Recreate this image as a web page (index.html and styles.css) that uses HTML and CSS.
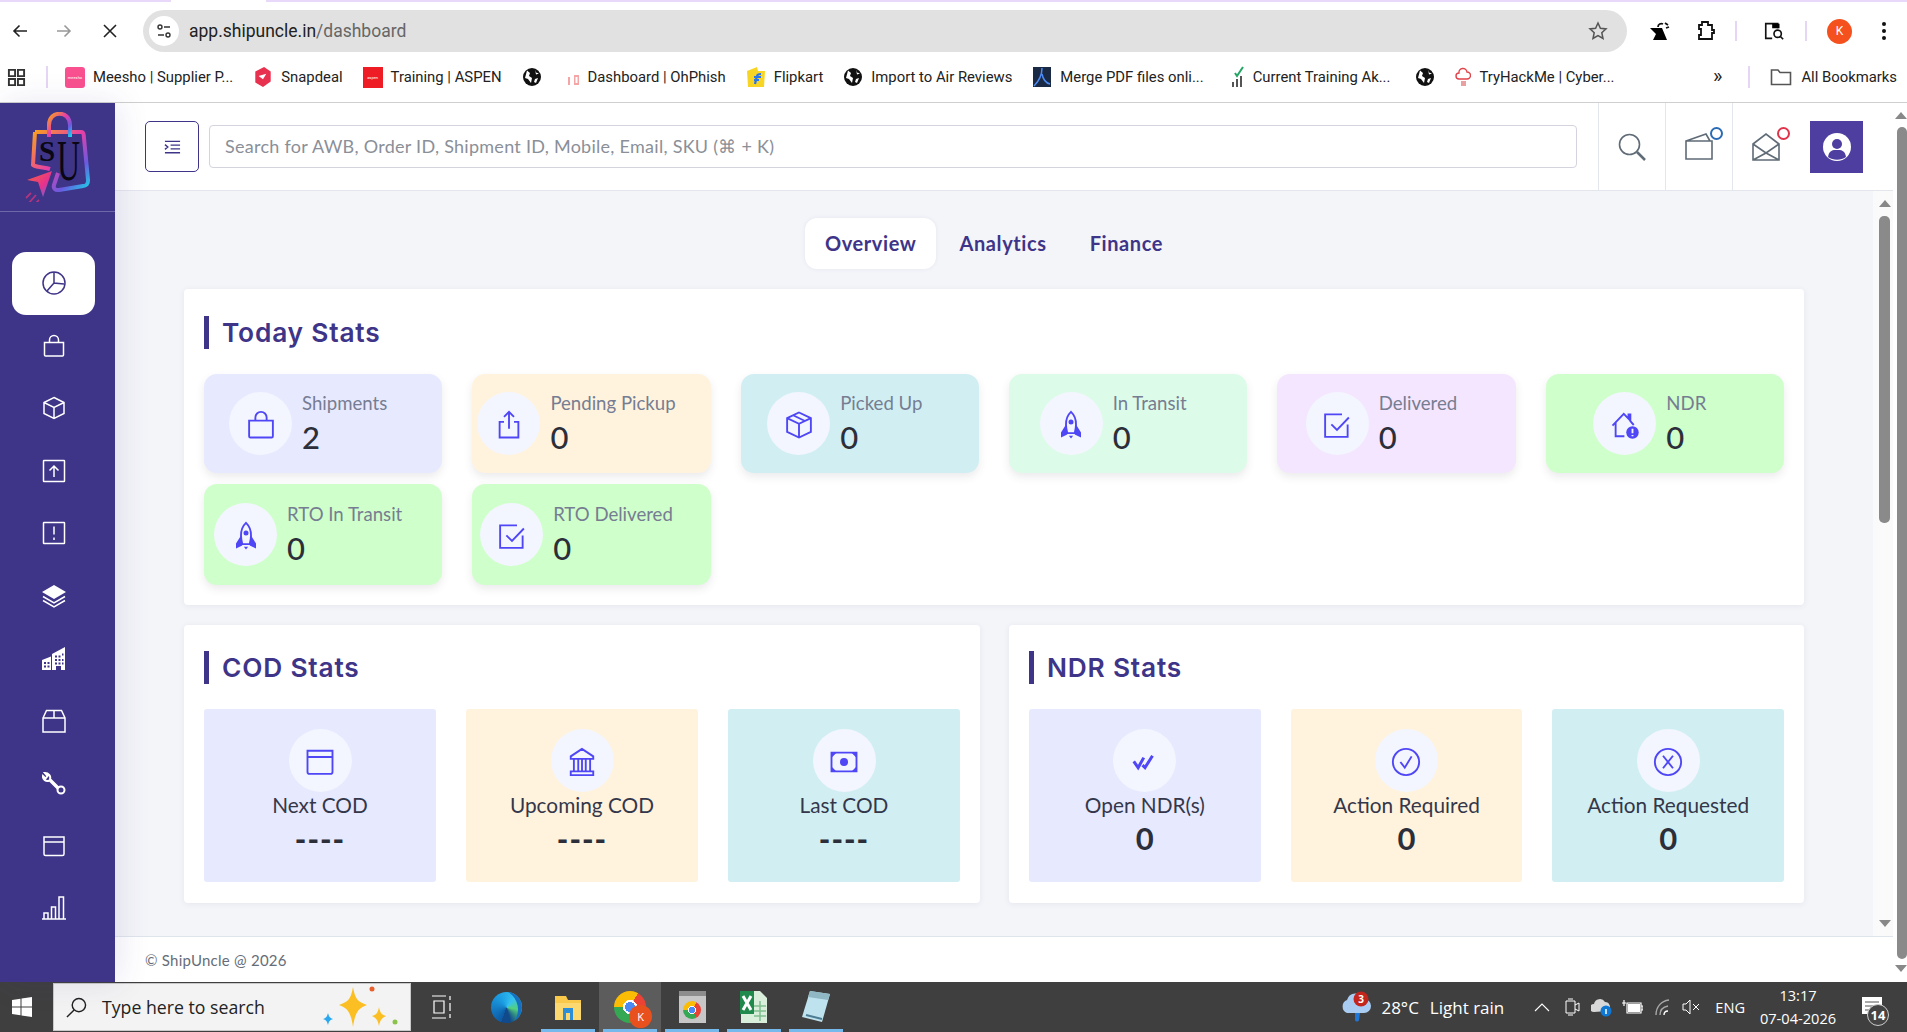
FILE: index.html
```html
<!DOCTYPE html>
<html lang="en">
<head>
    <meta charset="UTF-8">
    <title>ShipUncle Dashboard</title>
    <link rel="stylesheet" href="styles.css">
</head>
<body>
    <!-- shared icons -->
    <svg class="defs" aria-hidden="true">
        <symbol id="i-bag" viewBox="0 0 24 24"><path d="M2.500 8.500h19v12.500a1 1 0 0 1-1 1h-17a1 1 0 0 1-1-1zM7.500 8.500V6a4.500 4.500 0 0 1 9 0v2.500"/></symbol>
        <symbol id="i-box" viewBox="0 0 24 24"><path d="M12 1.500l10 5v11l-10 5-10-5v-11zM2 6.500l10 5 10-5M12 11.500v11"/></symbol>
        <symbol id="i-tapebox" viewBox="0 0 24 24"><path d="M12 2l9.500 4.500v11L12 22l-9.500-4.500v-11zM2.500 6.500L12 11l9.500-4.500M12 11v11M7.300 4.200l9.500 4.600"/></symbol>
        <symbol id="i-share" viewBox="0 0 24 24"><path d="M8 9.500H4.500v12.500h15V9.500H16M12 1.500V15M8 5.500l4-4 4 4"/></symbol>
        <symbol id="i-rocket" viewBox="0 0 24 24"><path d="M12 1.500c3 2.800 4 6.500 4 10 0 2.700-.5 5-1 7H9c-.5-2-1-4.300-1-7 0-3.500 1-7.200 4-10z"/><circle class="solid" cx="12" cy="9.500" r="2"/><path class="solid" d="M8 11.500l-4 6.500v4l5-2.500zM16 11.500l4 6.500v4l-5-2.500zM10.300 20.500h3.400L12 22.800z"/></symbol>
        <symbol id="i-check" viewBox="0 0 24 24"><path d="M20.500 11.500v10h-18v-18h13.500M7.500 11.500l4.500 4.500 9.500-10"/></symbol>
        <symbol id="i-home" viewBox="0 0 24 24"><path d="M2 12.500L11 3l3.800 4V3.500h1.500v5.500l2.700 3M4.500 10v11h7"/><circle class="solid" cx="18" cy="18" r="5"/><path class="cut" d="M18 15v3.500M18 20v1"/></symbol>
        <symbol id="i-window" viewBox="0 0 24 24"><path d="M2 3h20v17a1.500 1.500 0 0 1-1.500 1.500h-17A1.500 1.500 0 0 1 2 20zM2 8h20"/></symbol>
        <symbol id="i-bank" viewBox="0 0 24 24"><path d="M12 1.500L3 7.500v2h18v-2zM5.500 9.500v10M9 9.500v10M12 9.500v10M15 9.500v10M18.500 9.500v10M3 19.500h18v3H3z"/></symbol>
        <symbol id="i-cash" viewBox="0 0 24 24"><path d="M2 4.500h20v15H2z"/><circle class="solid" cx="12" cy="12" r="3.200"/><path class="solid" d="M2 4.500h4l-4 4zM22 4.500h-4l4 4zM2 19.500h4l-4-4zM22 19.500h-4l4-4z"/></symbol>
        <symbol id="i-double" viewBox="0 0 24 24"><path class="heavy" d="M3 11.500l3.500 5L11 8.500M10 14.500l2 2L18 7"/></symbol>
        <symbol id="i-circle-check" viewBox="0 0 24 24"><circle cx="12" cy="12" r="10.500"/><path d="M7.500 12l3.500 4.500 5.500-9"/></symbol>
        <symbol id="i-circle-x" viewBox="0 0 24 24"><circle cx="12" cy="12" r="10.500"/><path d="M8 7l8 10M16 7L8 17"/></symbol>
        <symbol id="i-globe" viewBox="0 0 20 20"><circle class="solid" cx="10" cy="10" r="9"/><path class="cut-white" d="M5 3.500l3 2.500-1 3 3 2-1 5-3-4-3-1zM13 2.500l1 3 3 1-3 1zM13 12l3-1-2 5-2-1z"/></symbol>
    </svg>

    <div class="tabstrip"><span class="tabstrip-gap"></span></div>

    <div class="toolbar">
        <svg class="nav nav-back" viewBox="0 0 16 16"><path d="M15 8H2M7.500 2.500L2 8l5.500 5.500"/></svg>
        <svg class="nav nav-fwd" viewBox="0 0 16 16"><path d="M1 8h13M8.500 2.500L14 8l-5.500 5.500"/></svg>
        <svg class="nav nav-stop" viewBox="0 0 14 14"><path d="M1 1l12 12M13 1L1 13"/></svg>
        <div class="omnibox">
            <span class="site-btn">
                <svg viewBox="0 0 16 16"><circle cx="4" cy="4" r="2"/><path d="M8 4h6M2 12h6"/><circle cx="12" cy="12" r="2"/></svg>
            </span>
            <span class="url">app.shipuncle.in<span class="url-path">/dashboard</span></span>
            <svg class="star" viewBox="0 0 20 20"><path d="M10 2l2.400 5.300 5.600.6-4.200 3.800 1.200 5.800L10 14.600l-5 2.900 1.200-5.800L2 7.900l5.600-.6z"/></svg>
        </div>
        <svg class="ext ext-one" viewBox="0 0 22 22"><path d="M2 8h12l5 12H5l3-6z"/><path class="ext-line" d="M10 7c0-3 3-4 5-3M17 3l3 2M18 8l3-1"/></svg>
        <svg class="ext ext-two" viewBox="0 0 22 22"><path class="ext-line" d="M5 5h3V2h6v3h4v5h2v3h-2v6H5v-4h2V9H5z"/></svg>
        <span class="toolbar-sep"></span>
        <svg class="ext ext-three" viewBox="0 0 24 24"><path class="ext-line" d="M10 20H3V4h13v5"/><path d="M10 4h8v5h-8z"/><circle class="ext-line" cx="16" cy="15" r="4"/><path class="ext-line" d="M19 18l3 3"/></svg>
        <span class="toolbar-sep toolbar-sep-b"></span>
        <span class="profile">K</span>
        <span class="kebab"><i></i><i></i><i></i></span>
    </div>

    <div class="bookmarks">
        <svg class="apps" viewBox="0 0 20 20"><path d="M2 2h6.500v6.500H2zM11.500 2H18v6.500h-6.500zM2 11.500h6.500V18H2zM11.500 11.500H18V18h-6.500z"/></svg>
        <span class="bm-sep"></span>
        <div class="bm-list">
            <span class="bm"><span class="fav fav-meesho">meesho</span>Meesho | Supplier P...</span>
            <span class="bm"><svg class="fav-svg" viewBox="0 0 18 20"><path d="M2 5l8-4 6 4v9l-7 5-7-4z" fill="#e8304f"/><path d="M5 9l7-2-3 5z" fill="#fff"/></svg>Snapdeal</span>
            <span class="bm"><span class="fav fav-aspen">aspen</span>Training | ASPEN</span>
            <span class="bm bm-icon"><svg class="fav-globe"><use href="#i-globe"/></svg></span>
            <span class="bm bm-push"><svg class="fav-ohphish" viewBox="0 0 13 20"><path d="M1 10h2v8H1zM7 8h5v10H7zM8.500 10v6h2v-6z" fill="#f4a6a6" fill-rule="evenodd"/></svg>Dashboard | OhPhish</span>
            <span class="bm"><svg class="fav-svg" viewBox="0 0 20 22"><path d="M1 5l10-4 1 4h7l-1 16H2z" fill="#f8d524"/><path d="M8 11h7M9 18l2-8c.4-2 2-2 4-2M8 14h5" fill="none" stroke="#2874f0" stroke-width="2.200"/></svg>Flipkart</span>
            <span class="bm"><svg class="fav-globe"><use href="#i-globe"/></svg>Import to Air Reviews</span>
            <span class="bm"><svg class="fav-svg" viewBox="0 0 20 22"><path d="M1 1h18v20H1z" fill="#1b2a44"/><path d="M10 2c0 8-3 13-8 18M10 8c1 5 4 9 8 10" fill="none" stroke="#4d8cf5" stroke-width="1.500"/></svg>Merge PDF files onli...</span>
            <span class="bm bm-push"><svg class="fav-current" viewBox="0 0 14 22"><path d="M5 7l2 3 6-9" fill="none" stroke="#22a565" stroke-width="2"/><path d="M2 16h2v5H2zM6 13h2v8H6zM10 10h2v11h-2z" fill="#555"/></svg>Current Training Ak...</span>
            <span class="bm bm-icon bm-push"><svg class="fav-globe"><use href="#i-globe"/></svg></span>
            <span class="bm"><svg class="fav-current" viewBox="0 0 16 22"><path d="M4 13a3 3 0 0 1 0-6 4 4 0 0 1 8-1 3.500 3.500 0 0 1 0 7z" fill="none" stroke="#e0434a" stroke-width="1.400"/><path d="M6 15h5v5H6z" fill="#e9a0a0"/></svg>TryHackMe | Cyber...</span>
        </div>
        <span class="bm-more">»</span>
        <span class="bm-sep bm-sep-b"></span>
        <svg class="bm-folder" viewBox="0 0 22 18"><path d="M1.500 2h6.500l2 2.500h10.500v12h-19z"/></svg>
        <span class="bm-all">All Bookmarks</span>
    </div>

    <div class="app">
        <aside class="sidebar">
            <div class="logo">
                <svg viewBox="0 0 70 90" width="70" height="90">
                    <defs>
                        <linearGradient id="logo-grad" x1="0" y1="0" x2="1" y2="1">
                            <stop offset="0" stop-color="#f9a11b"/>
                            <stop offset=".45" stop-color="#e63fa8"/>
                            <stop offset=".75" stop-color="#6a5ae0"/>
                            <stop offset="1" stop-color="#19d3e8"/>
                        </linearGradient>
                        <linearGradient id="arrow-grad" x1="0" y1="0" x2="1" y2="1">
                            <stop offset="0" stop-color="#f9643a"/>
                            <stop offset=".6" stop-color="#e6318f"/>
                            <stop offset="1" stop-color="#3a7bf0"/>
                        </linearGradient>
                    </defs>
                    <path class="logo-line" d="M12 20h46c2 0 2.500 1 2.700 3L65 68c.3 4-2 6-5 6L36 78c-4 .5-6-2-5-5l4-12M12 20L10 53c5 3 11 2 17 4"/>
                    <path class="logo-line" d="M26 25V13c0-15 21-15 21 0v12"/>
                    <path fill="url(#arrow-grad)" d="M4 68l25-9-9 26-5-15z"/>
                    <path class="logo-trail" d="M8 81l-5 5M13 83l-8 9M16 88l-3 3"/>
                    <text class="logo-s" x="16" y="49">S</text>
                    <text class="logo-u" transform="translate(34 68) scale(.55 1)">U</text>
                </svg>
            </div>
            <nav class="side-nav">
                <a class="side-item active"><svg class="side-icon" viewBox="0 0 24 24"><circle cx="12" cy="12" r="11"/><path d="M12 1v11l10 1M12 12l-7 8"/></svg></a>
                <a class="side-item"><svg class="side-icon"><use href="#i-bag"/></svg></a>
                <a class="side-item"><svg class="side-icon"><use href="#i-box"/></svg></a>
                <a class="side-item"><svg class="side-icon" viewBox="0 0 24 24"><path d="M2 1.500h20a.5.5 0 0 1 .5.5v20a.5.5 0 0 1-.5.5H2a.5.5 0 0 1-.5-.5V2a.5.5 0 0 1 .5-.5zM12 18V7M7.500 11.500L12 7l4.500 4.500"/></svg></a>
                <a class="side-item"><svg class="side-icon" viewBox="0 0 24 24"><path d="M2 1.500h20a.5.5 0 0 1 .5.500v20a.5.5 0 0 1-.5.5H2a.5.5 0 0 1-.5-.5V2a.5.5 0 0 1 .5-.5zM12 5.500v8M12 16.500v2.500"/></svg></a>
                <a class="side-item"><svg class="side-icon" viewBox="0 0 24 24"><path class="solid" d="M12 1l12 7-12 7L0 8z"/><path d="M1 12.500l11 6.500 11-6.500M1 16.500L12 23l11-6.500"/></svg></a>
                <a class="side-item"><svg class="side-icon" viewBox="0 0 24 24"><path class="solid" fill-rule="evenodd" d="M10 8L23 1v23H10zM13 9.500v2h2v-2zM16.500 9.500v2h2v-2zM20 7.500v2h1.500v-2zM13 13v2h2v-2zM16.500 13v2h2v-2zM20 13v2h1.500v-2zM13 16.500v2h2v-2zM16.500 16.500v2h2v-2zM20 16.500v2h1.500v-2zM14 24v-4h5v4zM0 14l9-3.500V24H0zM2 16v2h2v-2zM5.500 16v2h2v-2zM2 19.500v2h2v-2zM5.500 19.500v2h2v-2z"/></svg></a>
                <a class="side-item"><svg class="side-icon" viewBox="0 0 24 24"><path d="M1 9l3.500-7.500h15L23 9v14H1zM1 9h22M12 1.500V9"/></svg></a>
                <a class="side-item"><svg class="side-icon side-wrench" viewBox="0 0 24 24"><circle cx="19" cy="19" r="3.500"/><path d="M16.500 16.500L8 8c1-3-1.500-6-5-6l2.500 3-2 2.500L1 5c-.5 3.500 3 6 6.500 4.500l8 8"/></svg></a>
                <a class="side-item"><svg class="side-icon"><use href="#i-window"/></svg></a>
                <a class="side-item"><svg class="side-icon" viewBox="0 0 24 24"><path d="M0 23h24M2 23v-6h4v6M9.500 23V11h4v12M17 23V1h4.500v22"/></svg></a>
            </nav>
        </aside>

        <div class="main">
            <header class="topbar">
                <button class="toggle">
                    <svg viewBox="0 0 18 14"><path d="M1 1h16M7 5h10M7 9h10M1 13h16M1 4.500L4 7 1 9.500"/></svg>
                </button>
                <div class="search">Search for AWB, Order ID, Shipment ID, Mobile, Email, SKU (⌘ + K)</div>
                <div class="top-cell">
                    <svg class="top-icon" viewBox="0 0 28 28"><circle cx="11.500" cy="11.500" r="10"/><path d="M19 19l8 8" class="thick"/></svg>
                </div>
                <div class="top-cell">
                    <svg class="top-icon" viewBox="0 0 28 28"><path d="M1 8h26v18H1zM1 8l20-7 4 7"/></svg>
                    <span class="ring ring-blue"></span>
                </div>
                <div class="top-cell">
                    <svg class="top-icon" viewBox="0 0 28 28"><path d="M1 11L14 1l13 10v16H1zM1 11l13 9 13-9M1 27l13-7 13 7"/></svg>
                    <span class="ring ring-red"></span>
                </div>
                <div class="avatar">
                    <svg viewBox="0 0 28 28"><circle class="av-bg" cx="14" cy="14" r="14"/><circle class="av-cut" cx="14" cy="11" r="5"/><path class="av-cut" d="M5 24c1-7 5-7 9-7s8 0 9 7c-5 3.500-13 3.500-18 0z"/></svg>
                </div>
            </header>

            <div class="body-row">
                <div class="content">
                    <div class="tabs">
                        <a class="tab tab-on">Overview</a>
                        <a class="tab">Analytics</a>
                        <a class="tab">Finance</a>
                    </div>

                    <section class="panel panel-today">
                        <h2 class="panel-title">Today Stats</h2>
                        <div class="stat-grid">
                            <div class="stat bg-blue">
                                <span class="stat-ic"><svg><use href="#i-bag"/></svg></span>
                                <div class="stat-txt"><div class="stat-lbl">Shipments</div><div class="stat-val">2</div></div>
                            </div>
                            <div class="stat bg-cream">
                                <span class="stat-ic"><svg><use href="#i-share"/></svg></span>
                                <div class="stat-txt"><div class="stat-lbl">Pending Pickup</div><div class="stat-val">0</div></div>
                            </div>
                            <div class="stat bg-teal">
                                <span class="stat-ic"><svg><use href="#i-tapebox"/></svg></span>
                                <div class="stat-txt"><div class="stat-lbl">Picked Up</div><div class="stat-val">0</div></div>
                            </div>
                            <div class="stat bg-mint">
                                <span class="stat-ic"><svg><use href="#i-rocket"/></svg></span>
                                <div class="stat-txt"><div class="stat-lbl">In Transit</div><div class="stat-val">0</div></div>
                            </div>
                            <div class="stat bg-lilac">
                                <span class="stat-ic"><svg><use href="#i-check"/></svg></span>
                                <div class="stat-txt"><div class="stat-lbl">Delivered</div><div class="stat-val">0</div></div>
                            </div>
                            <div class="stat bg-green">
                                <span class="stat-ic"><svg><use href="#i-home"/></svg></span>
                                <div class="stat-txt"><div class="stat-lbl">NDR</div><div class="stat-val">0</div></div>
                            </div>
                            <div class="stat stat-tall bg-green">
                                <span class="stat-ic"><svg><use href="#i-rocket"/></svg></span>
                                <div class="stat-txt"><div class="stat-lbl">RTO In Transit</div><div class="stat-val">0</div></div>
                            </div>
                            <div class="stat stat-tall bg-green">
                                <span class="stat-ic"><svg><use href="#i-check"/></svg></span>
                                <div class="stat-txt"><div class="stat-lbl">RTO Delivered</div><div class="stat-val">0</div></div>
                            </div>
                        </div>
                    </section>

                    <div class="panel-row">
                        <section class="panel">
                            <h2 class="panel-title">COD Stats</h2>
                            <div class="tile-grid">
                                <div class="tile bg-blue">
                                    <span class="stat-ic"><svg><use href="#i-window"/></svg></span>
                                    <div class="tile-lbl">Next COD</div>
                                    <div class="tile-val tile-dash">----</div>
                                </div>
                                <div class="tile bg-cream">
                                    <span class="stat-ic"><svg><use href="#i-bank"/></svg></span>
                                    <div class="tile-lbl">Upcoming COD</div>
                                    <div class="tile-val tile-dash">----</div>
                                </div>
                                <div class="tile bg-teal">
                                    <span class="stat-ic"><svg><use href="#i-cash"/></svg></span>
                                    <div class="tile-lbl">Last COD</div>
                                    <div class="tile-val tile-dash">----</div>
                                </div>
                            </div>
                        </section>
                        <section class="panel">
                            <h2 class="panel-title">NDR Stats</h2>
                            <div class="tile-grid">
                                <div class="tile bg-blue">
                                    <span class="stat-ic"><svg><use href="#i-double"/></svg></span>
                                    <div class="tile-lbl">Open NDR(s)</div>
                                    <div class="tile-val">0</div>
                                </div>
                                <div class="tile bg-cream">
                                    <span class="stat-ic"><svg><use href="#i-circle-check"/></svg></span>
                                    <div class="tile-lbl">Action Required</div>
                                    <div class="tile-val">0</div>
                                </div>
                                <div class="tile bg-teal">
                                    <span class="stat-ic"><svg><use href="#i-circle-x"/></svg></span>
                                    <div class="tile-lbl">Action Requested</div>
                                    <div class="tile-val">0</div>
                                </div>
                            </div>
                        </section>
                    </div>
                </div>
                <div class="inner-scroll">
                    <span class="arrow-up"></span>
                    <span class="inner-thumb"></span>
                    <span class="arrow-down"></span>
                </div>
            </div>

            <footer class="footer">© ShipUncle @ 2026</footer>
        </div>

        <div class="outer-scroll">
            <span class="arrow-up"></span>
            <span class="outer-thumb"></span>
            <span class="arrow-down"></span>
        </div>
    </div>

    <div class="taskbar">
        <svg class="win-logo" viewBox="0 0 20 20"><path d="M0 3l8.500-1.200v7.700H0zM9.500 1.600L20 0v9.500H9.500zM0 10.500h8.500v7.700L0 17zM9.500 10.500H20V20L9.500 18.400z"/></svg>
        <div class="task-search">
            <svg class="task-search-ic" viewBox="0 0 22 22"><circle cx="13.500" cy="8.500" r="7"/><path d="M8.500 13.500L1 21"/></svg>
            <span class="task-search-txt">Type here to search</span>
            <svg class="sparkle" viewBox="0 0 76 44">
                <path d="M30 2c2 12 5 15 14 18-9 3-12 8-14 22-2-14-5-19-14-22 9-3 12-6 14-18z" fill="#fbbf24"/>
                <path d="M56 22c1 6 3 8 7 9-4 2-6 4-7 10-1-6-3-8-7-10 4-1 6-3 7-9z" fill="#fbbf24"/>
                <circle cx="49" cy="4" r="2.500" fill="#e8602c"/>
                <circle cx="72" cy="37" r="2.500" fill="#8bc34a"/>
                <path d="M5 28c1 4 2 5 5 6-3 1-4 2-5 6-1-4-2-5-5-6 3-1 4-2 5-6z" fill="#29a8f0"/>
            </svg>
        </div>
        <svg class="task-view" viewBox="0 0 20 24"><path d="M0 1h14M0 23h14M2 6h10v12H2zM18 1v4M18 8v8M18 19v4"/></svg>
        <span class="task-app task-first"><span class="edge"></span></span>
        <span class="task-app run">
            <svg class="task-svg" viewBox="0 0 28 28"><path d="M1 3h11l2 4h13v20H1z" fill="#f8c94a"/><path d="M1 10h26v17H1z" fill="#fbd970"/><path d="M9 15h10v12h-3v-7h-4v7H9z" fill="#2a8fd8"/></svg>
        </span>
        <span class="task-app run active"><span class="chrome"><span class="chrome-badge">K</span></span></span>
        <span class="task-app run">
            <span class="chrome-window"><span class="chrome chrome-small"></span></span>
        </span>
        <span class="task-app run">
            <svg class="task-svg" viewBox="0 0 28 32"><path d="M1 0h19l7 7v25H1z" fill="#d9efdc"/><path d="M0 0h14v23H0z" fill="#1f8a4c"/><path d="M3 5l8 14M11 5L3 19" stroke="#fff" stroke-width="3"/><path d="M14 15h12M14 20h12M14 25h12M20 10v20" stroke="#7fbf8f" stroke-width="1.500"/></svg>
        </span>
        <span class="task-app run">
            <svg class="task-svg" viewBox="0 0 28 32"><path d="M8 0l20 3-8 28L0 26z" fill="#bfe3ee"/><path d="M8 0l20 3-2 6L6 6z" fill="#8fb7c4"/><path d="M4 24l16 4" stroke="#4d7d95" stroke-width="2"/></svg>
        </span>

        <div class="tray">
            <svg class="weather" viewBox="0 0 32 32">
                <path d="M8 22a7 7 0 0 1 0-13 9 9 0 0 1 17-1 7 7 0 0 1 0 14z" fill="#a9cdf2"/>
                <path d="M16 22h5l-1 7c-1 2-3 2-4 0z" fill="#1f78d8"/>
                <circle cx="22" cy="8" r="7.500" fill="#c4261d"/>
                <text class="weather-num" x="22" y="11.500">3</text>
            </svg>
            <span class="tray-temp">28°C</span>
            <span class="tray-cond">Light rain</span>
            <svg class="tray-chev" viewBox="0 0 16 9"><path d="M1 8l7-7 7 7"/></svg>
            <svg class="tray-meet" viewBox="0 0 15 18"><path d="M1 3h9v12H1zM10 7l4-2v8l-4-2M3 1h5M3 17h5"/></svg>
            <svg class="tray-cloud" viewBox="0 0 21 20"><path d="M3 15a4 4 0 0 1 0-8 6 6 0 0 1 11-2 5 5 0 0 1 3 9z" fill="#d8d8d8"/><circle cx="15" cy="14" r="5.500" fill="#0f78d4"/><path d="M15 12v5" stroke="#fff" stroke-width="1.500"/></svg>
            <svg class="tray-batt" viewBox="0 0 21 15"><path d="M5 3h14v10H5zM19 6h2v4h-2zM0 3h4M2 0v6" fill="none" stroke="#fff" stroke-width="1.200"/><path d="M6 4h12v8H6z" fill="#fff"/></svg>
            <svg class="tray-wifi" viewBox="0 0 16 18"><path d="M1 17C1 9 6 3 14 2M5 17c0-5 3-8 8-9" opacity=".55"/><path d="M9 17c0-3 1-4 4-4"/></svg>
            <svg class="tray-vol" viewBox="0 0 18 16"><path d="M1 5h3l4-4v14l-4-4H1zM11 5l6 6M17 5l-6 6"/></svg>
            <span class="tray-lang">ENG</span>
            <div class="tray-clock"><div>13:17</div><div>07-04-2026</div></div>
            <span class="notif">
                <svg viewBox="0 0 22 22"><path d="M1 1h20v17H1z" fill="#fff"/><path d="M4 6h14M4 10h14M4 14h10" stroke="#555" stroke-width="1.200"/></svg>
                <span class="notif-count">14</span>
            </span>
        </div>
    </div>
</body>
</html>
```

FILE: styles.css
```css
* {
    box-sizing: border-box;
}

html, body {
    margin: 0;
    height: 100%;
}

body {
    width: 1907px;
    height: 1032px;
    overflow: hidden;
    display: flex;
    flex-direction: column;
    font-family: "Lato", "Noto Sans", sans-serif;
    background: #fff;
}

.defs {
    position: absolute;
    width: 0;
    height: 0;
}

symbol path, symbol circle {
    fill: none;
    stroke: currentColor;
    stroke-width: 1.5;
}

symbol .solid {
    fill: currentColor;
    stroke: none;
}

symbol .cut {
    fill: none;
    stroke: #f3f6fe;
}

symbol .cut-white {
    fill: #fff;
    stroke: none;
}

symbol .heavy {
    stroke-width: 2.4;
}

/* browser chrome */
.tabstrip {
    height: 2px;
    background: #e8d9fa;
    padding-left: 171px;
    flex: none;
}

.tabstrip-gap {
    display: block;
    width: 95px;
    height: 2px;
    background: #fff;
}

.toolbar {
    height: 58px;
    flex: none;
    display: flex;
    align-items: center;
}

.nav {
    width: 16px;
    height: 16px;
    fill: none;
    stroke: #222;
    stroke-width: 1.6;
}

.nav-back { margin-left: 12px; }
.nav-fwd { margin-left: 28px; stroke: #999; }
.nav-stop { margin-left: 31px; width: 14px; height: 14px; }

.omnibox {
    width: 1484px;
    height: 42px;
    margin-left: 26px;
    background: #e1e1e1;
    border-radius: 21px;
    display: flex;
    align-items: center;
    padding: 0 5px 0 6px;
}

.site-btn {
    width: 30px;
    height: 30px;
    border-radius: 50%;
    background: #fff;
    display: flex;
    align-items: center;
    justify-content: center;
}

.site-btn svg {
    width: 16px;
    height: 16px;
    fill: none;
    stroke: #333;
    stroke-width: 1.4;
}

.url {
    margin-left: 10px;
    font: 17.5px "Roboto", sans-serif;
    color: #222;
    flex: 1;
}

.url-path {
    color: #666;
}

.star {
    width: 20px;
    height: 20px;
    margin-right: 14px;
    fill: none;
    stroke: #555;
    stroke-width: 1.5;
}

.ext {
    width: 22px;
    height: 22px;
    flex: none;
}

.ext-line {
    fill: none;
    stroke: #111;
    stroke-width: 1.8;
}

.ext-one { margin-left: 21px; }
.ext-two { margin-left: 23.5px; }
.ext-three { margin-left: 26.5px; }

.toolbar-sep {
    width: 2px;
    height: 20px;
    margin-left: 19px;
    background: #e5d6f5;
}

.toolbar-sep-b {
    margin-left: 20px;
}

.profile {
    width: 25px;
    height: 25px;
    margin-left: 20px;
    border-radius: 50%;
    background: #f4511e;
    color: #fff;
    font: 12px "Roboto", sans-serif;
    display: flex;
    align-items: center;
    justify-content: center;
}

.kebab {
    margin-left: 30px;
    display: flex;
    flex-direction: column;
    gap: 3px;
}

.kebab i {
    display: block;
    width: 4px;
    height: 4px;
    border-radius: 50%;
    background: #111;
}

.bookmarks {
    height: 43px;
    flex: none;
    display: flex;
    align-items: center;
    border-bottom: 1px solid #cfcfcf;
    padding-left: 7px;
    padding-bottom: 8px;
    font: 14.85px "Roboto", sans-serif;
    color: #222;
}

.apps {
    width: 19px;
    height: 19px;
    fill: none;
    stroke: #333;
    stroke-width: 2;
}

.bm-sep {
    width: 2px;
    height: 22px;
    margin-left: 20px;
    background: #e5d6f5;
}

.bm-list {
    display: flex;
    align-items: center;
    gap: 20px;
    margin-left: 17px;
    width: 1648px;
}

.bm {
    display: flex;
    align-items: center;
    gap: 8px;
    white-space: nowrap;
}

.bm-push {
    margin-left: 5px;
}

.fav {
    width: 20px;
    height: 21px;
    color: #fff;
    font-size: 4px;
    display: flex;
    align-items: center;
    justify-content: center;
    overflow: hidden;
}

.fav-meesho {
    background: #f9508f;
    border-radius: 3px;
}

.fav-aspen {
    background: #ee1c25;
}

.fav-svg {
    width: 20px;
    height: 22px;
}

.fav-globe {
    width: 20px;
    height: 20px;
    color: #111;
}

.fav-ohphish {
    width: 13px;
    height: 20px;
}

.fav-current {
    width: 16px;
    height: 22px;
}

.bm-more {
    font-size: 20px;
    line-height: 1;
    padding-bottom: 3px;
}

.bm-sep-b {
    margin-left: 26px;
}

.bm-folder {
    width: 22px;
    height: 18px;
    margin-left: 20px;
    fill: none;
    stroke: #555;
    stroke-width: 1.6;
}

.bm-all {
    margin-left: 9px;
}

/* app */
.app {
    flex: 1;
    min-height: 0;
    display: flex;
}

.sidebar {
    width: 115px;
    flex: none;
    background: #3e3488;
    box-shadow: 4px 0 30px rgba(62, 52, 136, 0.12);
    z-index: 2;
}

.logo {
    height: 109px;
    border-bottom: 1px solid #6f68a8;
    padding: 9px 0 0 23px;
}

.logo svg {
    display: block;
}

.logo-line {
    fill: none;
    stroke: url(#logo-grad);
    stroke-width: 4;
    stroke-linejoin: round;
}

.logo-trail {
    fill: none;
    stroke: #b0357f;
    stroke-width: 1.8;
}

.logo-s, .logo-u {
    font-family: "Liberation Serif", serif;
    font-weight: 700;
    fill: #0a0612;
}

.logo-s { font-size: 29px; }
.logo-u { font-size: 58px; font-weight: 400; }

.side-nav {
    padding: 40px 20px 0 12px;
    display: flex;
    flex-direction: column;
}

.side-item {
    height: 62.5px;
    display: flex;
    align-items: center;
    justify-content: center;
    color: #fff;
    border-radius: 14px;
}

.side-item.active {
    background: #fff;
    color: #3e3488;
}

.side-icon {
    width: 24px;
    height: 24px;
    fill: none;
    stroke: currentColor;
    stroke-width: 1.5;
}

.side-icon .solid {
    fill: currentColor;
    stroke: none;
}

.side-wrench {
    stroke-width: 2;
}

.main {
    flex: 1;
    min-width: 0;
    display: flex;
    flex-direction: column;
}

.topbar {
    height: 88px;
    flex: none;
    display: flex;
    align-items: center;
    padding-left: 30px;
    padding-right: 29px;
    background: #fff;
    border-bottom: 1px solid #e4e6ee;
}

.toggle {
    width: 54px;
    height: 51px;
    flex: none;
    background: #fff;
    border: 1.5px solid #3e3488;
    border-radius: 5px;
    display: flex;
    align-items: center;
    justify-content: center;
    padding: 0;
}

.toggle svg {
    width: 17px;
    height: 14px;
    fill: none;
    stroke: #3e3488;
    stroke-width: 1.5;
}

.search {
    width: 1368px;
    height: 43px;
    flex: none;
    margin-left: 10px;
    margin-right: 21px;
    padding: 0 0 1px 15px;
    border: 1px solid #d3d4de;
    border-radius: 4px;
    display: flex;
    align-items: center;
    font-size: 18px;
    letter-spacing: 0.27px;
    color: #8a8f98;
    white-space: nowrap;
}

.top-cell {
    position: relative;
    width: 67px;
    height: 87px;
    flex: none;
    border-left: 1px solid #e4e6ee;
    display: flex;
    align-items: center;
    justify-content: center;
}

.top-icon {
    width: 28px;
    height: 28px;
    fill: none;
    stroke: #5f6b76;
    stroke-width: 1.6;
}

.top-icon .thick {
    stroke-width: 2.5;
}

.ring {
    position: absolute;
    top: 24px;
    left: 44px;
    width: 13px;
    height: 13px;
    border-radius: 50%;
    background: #fff;
    border: 2px solid #2a6bb5;
}

.ring-red {
    border-color: #e0344b;
}

.avatar {
    width: 53px;
    height: 52px;
    flex: none;
    margin-left: 11px;
    background: #4e3ea0;
    display: flex;
    align-items: center;
    justify-content: center;
}

.avatar svg {
    width: 28px;
    height: 28px;
}

.av-bg { fill: #fff; }
.av-cut { fill: #4e3ea0; }

.body-row {
    flex: 1;
    min-height: 0;
    display: flex;
}

.content {
    flex: 1;
    min-width: 0;
    padding: 27px 69px 0 69px;
    background: #f4f5f9;
    display: flex;
    flex-direction: column;
    gap: 20px;
}

/* tabs */
.tabs {
    display: flex;
    justify-content: center;
    gap: 3px;
}

.tab {
    height: 51px;
    padding: 0 20px 2px;
    border-radius: 12px;
    display: flex;
    align-items: center;
    font-size: 20px;
    font-weight: 700;
    letter-spacing: 0.6px;
    color: #3e3488;
}

.tab-on {
    background: #fff;
    box-shadow: 0 0 4px rgba(62, 52, 136, 0.08);
}

/* panels */
.panel {
    background: #fff;
    border-radius: 4px;
    padding: 26px 20px 21px;
    box-shadow: 0 1px 6px rgba(60, 60, 100, 0.08);
}

.panel-today {
    padding-top: 27px;
    padding-bottom: 20px;
}

.panel-row {
    display: grid;
    grid-template-columns: 796px 795px;
    gap: 29px;
}

.panel-title {
    height: 33px;
    margin: 0 0 25px;
    padding-left: 13px;
    border-left: 5px solid #3e3488;
    display: flex;
    align-items: center;
    font-family: "Inter", sans-serif;
    font-size: 26.3px;
    font-weight: 600;
    letter-spacing: 0.8px;
    color: #3e3488;
}

.bg-blue { background: #e7e9fe; }
.bg-cream { background: #fff3de; }
.bg-teal { background: #d1eff3; }
.bg-mint { background: #ddfbe9; }
.bg-lilac { background: #f4e6fe; }
.bg-green { background: #cfffca; }

/* today cards */
.stat-grid {
    display: grid;
    grid-template-columns: repeat(6, 1fr);
    gap: 11px 30px;
}

.stat {
    height: 99px;
    border-radius: 13px;
    display: flex;
    align-items: center;
    justify-content: center;
    box-shadow: 0 4px 8px rgba(60, 60, 80, 0.1);
}

.stat-tall {
    height: 101px;
}

.stat-ic {
    width: 63px;
    height: 63px;
    flex: none;
    border-radius: 50%;
    background: #f3f6fe;
    display: flex;
    align-items: center;
    justify-content: center;
    color: #4f46f5;
}

.stat-ic svg {
    width: 30px;
    height: 30px;
    margin-top: 3px;
}

.stat-txt {
    margin-left: 10px;
    padding-right: 30px;
}

.stat-lbl {
    font-size: 18.6px;
    line-height: 22px;
    margin-top: -2px;
    color: #767d92;
    white-space: nowrap;
}

.stat-val {
    margin-top: 6px;
    font-size: 31px;
    line-height: 34px;
    font-weight: 500;
    color: #2c2f3a;
}

/* cod / ndr tiles */
.tile-grid {
    display: grid;
    grid-template-columns: repeat(3, 1fr);
    gap: 30px;
}

.tile {
    height: 173px;
    padding-top: 20px;
    border-radius: 3px;
    display: flex;
    flex-direction: column;
    align-items: center;
}

.tile-lbl {
    font-size: 20.8px;
    line-height: 26px;
    color: #34374a;
    white-space: nowrap;
}

.tile-val {
    margin-top: 2px;
    font-size: 31px;
    line-height: 36px;
    font-weight: 700;
    color: #2c2f3a;
}

.tile-dash {
    font-weight: 900;
    letter-spacing: 1px;
    margin-top: 3px;
}

/* scrollbars */
.inner-scroll {
    width: 20px;
    flex: none;
    background: #fafafa;
    padding: 9px 0 9px 3px;
    display: flex;
    flex-direction: column;
    align-items: center;
}

.outer-scroll {
    width: 14px;
    flex: none;
    padding: 9px 0 10px 3px;
    display: flex;
    flex-direction: column;
    align-items: flex-end;
}

.arrow-up, .arrow-down {
    width: 0;
    height: 0;
    flex: none;
    border-left: 6px solid transparent;
    border-right: 6px solid transparent;
}

.arrow-up { border-bottom: 7px solid #888; }
.arrow-down { border-top: 7px solid #888; margin-top: auto; }

.inner-thumb {
    width: 11px;
    height: 307px;
    margin-top: 9px;
    background: #8a8a8a;
    border-radius: 5px;
}

.outer-thumb {
    width: 10px;
    height: 832px;
    margin-top: 8px;
    background: #8a8a8a;
    border-radius: 5px;
}

.footer {
    height: 46px;
    flex: none;
    padding-left: 30px;
    background: #fff;
    border-top: 1px solid #dfe5ec;
    display: flex;
    align-items: center;
    font-size: 15px;
    letter-spacing: 0.25px;
    color: #666d78;
}

/* windows taskbar */
.taskbar {
    height: 50px;
    flex: none;
    display: flex;
    align-items: center;
    background: #3f3f3f;
    color: #fff;
    font-family: "Open Sans", sans-serif;
}

.win-logo {
    width: 20px;
    height: 20px;
    margin-left: 12px;
    fill: #fff;
    flex: none;
}

.task-search {
    width: 358px;
    height: 48px;
    margin-left: 21px;
    flex: none;
    background: #f3f3f3;
    border: 1px solid #c9c9c9;
    display: flex;
    align-items: center;
    color: #222;
}

.task-search-ic {
    width: 21px;
    height: 21px;
    margin-left: 12px;
    fill: none;
    stroke: #222;
    stroke-width: 1.5;
}

.task-search-txt {
    margin-left: 15px;
    font-size: 17.7px;
    flex: 1;
}

.sparkle {
    width: 76px;
    height: 44px;
    margin-right: 11px;
}

.task-view {
    width: 20px;
    height: 24px;
    margin-left: 21px;
    fill: none;
    stroke: #fff;
    stroke-width: 1.2;
    flex: none;
}

.task-app {
    position: relative;
    width: 62px;
    height: 50px;
    flex: none;
    display: flex;
    align-items: center;
    justify-content: center;
}

.task-first {
    margin-left: 23px;
}

.task-app.run::after {
    content: "";
    position: absolute;
    left: 4px;
    right: 4px;
    bottom: 0;
    height: 3px;
    background: #76b9ed;
}

.task-app.active {
    background: #5c5c5c;
}

.task-svg {
    width: 28px;
    height: 32px;
}

.edge {
    width: 31px;
    height: 31px;
    border-radius: 50%;
    background: conic-gradient(from 200deg, #0c59a4, #1b9de2 35%, #35c1f1 55%, #52d17c 72%, #114a8b 90%);
    box-shadow: inset -9px 2px 0 -5px #1570c0;
}

.chrome {
    position: relative;
    width: 32px;
    height: 32px;
    border-radius: 50%;
    background:
        radial-gradient(circle, #4a8af4 0 5px, #fff 5px 7px, transparent 7px),
        conic-gradient(from 30deg, #ea4335 0 120deg, #34a853 120deg 240deg, #fbbc05 240deg);
    display: block;
}

.chrome-small {
    width: 18px;
    height: 18px;
    background:
        radial-gradient(circle, #4a8af4 0 3px, #fff 3px 4px, transparent 4px),
        conic-gradient(from 30deg, #ea4335 0 120deg, #34a853 120deg 240deg, #fbbc05 240deg);
}

.chrome-badge {
    position: absolute;
    right: -6px;
    bottom: -5px;
    width: 23px;
    height: 23px;
    border-radius: 50%;
    background: #e8501e;
    font-size: 11px;
    display: flex;
    align-items: center;
    justify-content: center;
}

.chrome-window {
    width: 27px;
    height: 32px;
    background: #c7c7c7;
    border-top: 5px solid #8d8d8d;
    display: flex;
    align-items: center;
    justify-content: center;
}

.tray {
    margin-left: auto;
    display: flex;
    align-items: center;
    height: 50px;
    padding-right: 24px;
}

.weather {
    width: 32px;
    height: 32px;
}

.weather-num {
    font: 700 10px "Open Sans", sans-serif;
    fill: #fff;
    text-anchor: middle;
}

.tray-temp {
    margin-left: 10px;
    font-size: 17px;
}

.tray-cond {
    margin-left: 11px;
    font-size: 17px;
}

.tray-chev {
    width: 16px;
    height: 9px;
    margin-left: 30px;
    fill: none;
    stroke: #fff;
    stroke-width: 1.1;
}

.tray-meet {
    width: 15px;
    height: 18px;
    margin-left: 15px;
    fill: none;
    stroke: #fff;
    stroke-width: 1;
}

.tray-cloud {
    width: 21px;
    height: 20px;
    margin-left: 11px;
}

.tray-batt {
    width: 21px;
    height: 15px;
    margin-left: 10px;
}

.tray-wifi {
    width: 16px;
    height: 18px;
    margin-left: 12px;
    fill: none;
    stroke: #fff;
    stroke-width: 1.4;
}

.tray-vol {
    width: 18px;
    height: 16px;
    margin-left: 11px;
    fill: none;
    stroke: #fff;
    stroke-width: 1;
}

.tray-lang {
    margin-left: 15px;
    font-size: 14.6px;
}

.tray-clock {
    margin-left: 14px;
    width: 78px;
    text-align: center;
    font-size: 14.6px;
    line-height: 23px;
}

.notif {
    position: relative;
    width: 22px;
    height: 22px;
    margin-left: 24px;
}

.notif svg {
    width: 22px;
    height: 22px;
    display: block;
}

.notif-count {
    position: absolute;
    left: 6px;
    top: 8px;
    width: 22px;
    height: 22px;
    border-radius: 50%;
    border: 1px solid #ccc;
    background: #444;
    font-size: 13px;
    font-weight: 700;
    display: flex;
    align-items: center;
    justify-content: center;
}
```
